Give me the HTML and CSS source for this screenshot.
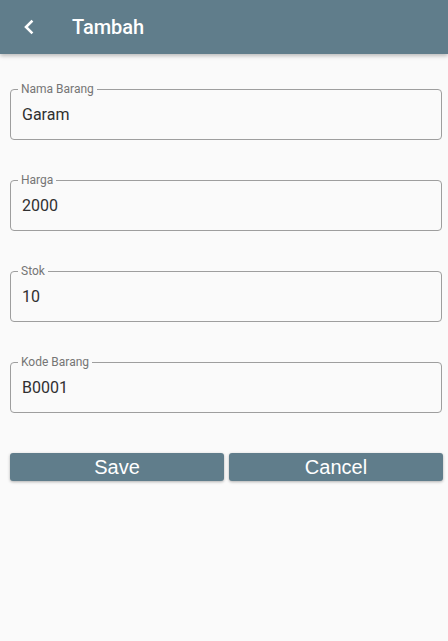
FILE: index.html
```html
<!DOCTYPE html>
<html lang="id">
<head>
<meta charset="utf-8">
<title>Tambah</title>
<link rel="stylesheet" href="styles.css">
</head>
<body>
<header class="appbar">
  <button class="back" aria-label="Kembali">
    <svg width="24" height="24" viewBox="0 0 24 24"><path d="M15.5 6.5 L10 12 L15.5 17.5" fill="none" stroke="#fff" stroke-width="2.6" stroke-linecap="square"/></svg>
  </button>
  <h1 class="title">Tambah</h1>
</header>
<main class="form">
  <fieldset class="field"><legend class="label">Nama Barang</legend><div class="value">Garam</div></fieldset>
  <fieldset class="field"><legend class="label">Harga</legend><div class="value">2000</div></fieldset>
  <fieldset class="field"><legend class="label">Stok</legend><div class="value">10</div></fieldset>
  <fieldset class="field"><legend class="label">Kode Barang</legend><div class="value">B0001</div></fieldset>
  <div class="actions">
    <button class="btn">Save</button>
    <button class="btn">Cancel</button>
  </div>
</main>
</body>
</html>
```
FILE: styles.css
```css
* { box-sizing: border-box; }
html, body { margin: 0; padding: 0; }
body {
  background: #fafafa;
  font-family: Roboto, "Liberation Sans", sans-serif;
  width: 448px;
  height: 641px;
  overflow: hidden;
}
.appbar {
  height: 54px;
  background: #607d8b;
  display: flex;
  align-items: center;
  padding-left: 16px;
  box-shadow: 0 2px 4px rgba(0,0,0,0.25);
  position: relative;
}
.back {
  width: 24px;
  height: 24px;
  padding: 0;
  border: 0;
  background: none;
  display: flex;
}
.title {
  margin: 0 0 0 32px;
  color: #fff;
  font-size: 20px;
  font-weight: 500;
  line-height: 24px;
}
.form {
  padding: 29px 6px 0 10px;
  display: flex;
  flex-direction: column;
}
.field {
  margin: 0 0 34px 0;
  border: 1px solid #9e9e9e;
  border-radius: 4px;
  padding: 0 11px;
  height: 57px;
  min-width: 0;
}
.label {
  font-size: 12px;
  line-height: 12px;
  color: #757575;
  padding: 0 3px;
  margin-left: -4px;
}
.value {
  font-size: 16px;
  line-height: 19px;
  color: #303030;
  padding-top: 10px;
}
.actions {
  display: flex;
  gap: 5px;
  margin-top: 6px;
  margin-right: -1px;
}
.btn {
  flex: 1;
  height: 28px;
  border: 0;
  border-radius: 3px;
  background: #607d8b;
  color: #fff;
  font-family: "Liberation Sans", Arial, sans-serif;
  font-size: 20px;
  line-height: 28px;
  padding: 0;
  box-shadow: 0 1px 3px rgba(0,0,0,0.3);
}
```
